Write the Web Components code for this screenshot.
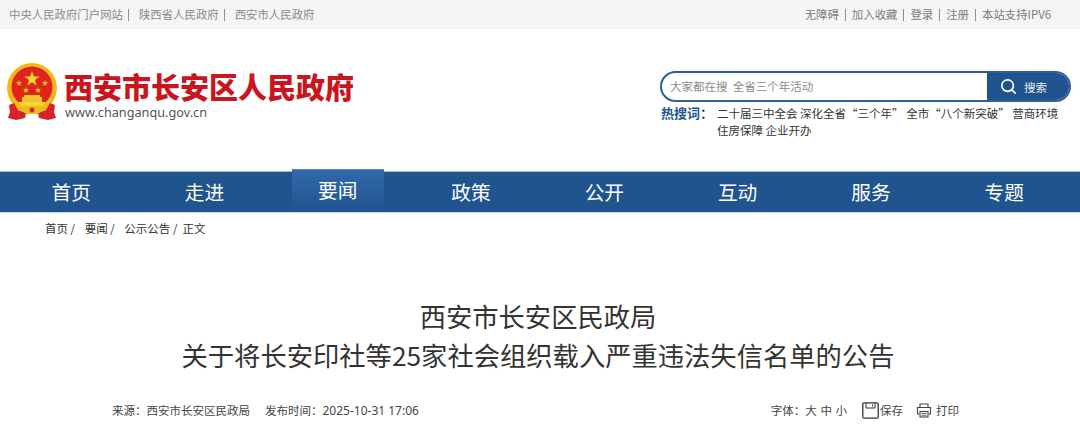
<!DOCTYPE html>
<html lang="zh">
<head>
<meta charset="utf-8">
<title>西安市长安区人民政府</title>
<style>
  html,body{margin:0;padding:0;background:#fff;}
  body{width:1080px;height:425px;overflow:hidden;font-family:"Noto Sans CJK SC","Noto Sans",sans-serif;}
</style>
</head>
<body>
<top-bar></top-bar>
<site-header></site-header>
<main-nav></main-nav>
<bread-crumb></bread-crumb>
<article-head></article-head>

<script>
// top grey strip
class TopBar extends HTMLElement{
    constructor(){
        super()
        const shadow = this.attachShadow({mode:"open"})
        shadow.innerHTML = `
        <style>
            :host{display:flex;justify-content:space-between;align-items:center;height:29px;padding:0 29px 0 9px;background:#f5f5f5;color:#8a8a8a;font-size:11.4px;line-height:29px;}
            .l,.r{display:flex;align-items:center;}
            .r{color:#7b7b7b;}
            i{display:block;width:1px;height:12px;background:#8f8f8f;}
            .l i{margin:0 10px 0 5px;}
            .r i{margin:0 6px;}
        </style>
        <div class="l"><span>中央人民政府门户网站</span><i></i><span>陕西省人民政府</span><i></i><span>西安市人民政府</span></div>
        <div class="r"><span>无障碍</span><i></i><span>加入收藏</span><i></i><span>登录</span><i></i><span>注册</span><i></i><span>本站支持IPV6</span></div>
        `
    }
}

class SearchBox extends HTMLElement{
    constructor(){
        super()
        const shadow = this.attachShadow({mode:"open"})
        shadow.innerHTML = `
        <style>
            :host{display:flex;width:411px;height:31px;box-sizing:border-box;border:2px solid #2f5f98;border-radius:16px;overflow:hidden;background:#fff;}
            .txt{flex:1;padding-left:8px;font-size:11.5px;line-height:27px;color:#8c8c8c;white-space:pre;}
            .btn{width:84px;margin:-2px -2px -2px 0;background:#20548f;color:#e4ebf3;display:flex;align-items:center;font-size:11.5px;padding-left:13px;gap:7px;box-sizing:border-box;flex:none;}
            svg{display:block;}
        </style>
        <div class="txt">大家都在搜  全省三个年活动</div>
        <div class="btn">
            <svg width="17" height="17" viewBox="0 0 17 17" fill="none" stroke="#fff" stroke-width="1.7"><circle cx="7.6" cy="7.6" r="5.8"/><path d="M11.8 11.8l3.4 3.4" stroke-linecap="round"/></svg>
            <span>搜索</span>
        </div>
        `
    }
}

class HotWords extends HTMLElement{
    constructor(){
        super()
        const shadow = this.attachShadow({mode:"open"})
        shadow.innerHTML = `
        <style>
            :host{display:flex;font-size:11.5px;line-height:17px;color:#333;}
            b{flex:none;width:56px;margin-left:1px;color:#20548f;font-size:13px;font-weight:700;line-height:16px;white-space:pre;}
            .w{width:350px;white-space:pre-wrap;}
        </style>
        <b>热搜词：</b>
        <div class="w">二十届三中全会 深化全省“三个年” 全市“八个新突破” 营商环境 住房保障 企业开办</div>
        `
    }
}

// emblem + site name, right side search
class SiteHeader extends HTMLElement{
    constructor(){
        super()
        const shadow = this.attachShadow({mode:"open"})
        shadow.innerHTML = `
        <style>
            :host{display:flex;justify-content:space-between;height:143px;box-sizing:border-box;padding:34px 9px 0 6px;}
            .logo{display:flex;gap:6px;height:60px;}
            svg{display:block;flex:none;}
            .name{padding-top:6px;}
            h1{margin:0;font-size:29px;line-height:34px;font-weight:900;color:#c8161e;white-space:nowrap;}
            .url{font-family:"Noto Sans",sans-serif;font-size:12.7px;line-height:16px;color:#555;margin:1px 0 0 1px;}
            .right{padding-top:8px;display:flex;flex-direction:column;gap:3px;}
        </style>
        <div class="logo">
            <svg width="52" height="57" viewBox="0 0 52 57">
                <circle cx="26" cy="25" r="25" fill="#eeb91c"/>
                <circle cx="26" cy="24" r="20.5" fill="#e2231a"/>
                <path d="M5 33l5 13 8 3h16l8-3 5-13-8 7H13z" fill="#eeb91c"/>
                <path d="M3 42l5-2 4 7 8 3-1 5-9 2-8-2 2-6z" fill="#d8222a"/>
                <path d="M49 42l-5-2-4 7-8 3 1 5 9 2 8-2-2-6z" fill="#d8222a"/>
                <path d="M26 8l1.9 5.6h5.9l-4.8 3.5 1.8 5.6-4.8-3.5-4.8 3.5 1.8-5.6-4.8-3.5h5.9z" fill="#f6d531"/>
                <path d="M13 17l.8 2.3h2.4l-2 1.4.8 2.3-2-1.4-2 1.4.8-2.3-2-1.4h2.4zM39 17l.8 2.3h2.4l-2 1.4.8 2.3-2-1.4-2 1.4.8-2.3-2-1.4h2.4zM20 24l.8 2.3h2.4l-2 1.4.8 2.3-2-1.4-2 1.4.8-2.3-2-1.4h2.4zM32 24l.8 2.3h2.4l-2 1.4.8 2.3-2-1.4-2 1.4.8-2.3-2-1.4h2.4z" fill="#f6d531"/>
                <path d="M18 32h16v2h2v5H16v-5h2z" fill="#f0c22c"/>
                <path d="M12 39h28l-3 4H15z" fill="#f6d531"/>
                <path d="M17 45c3-3 6-1 9 1 3-2 6-4 9-1l-3 6H20z" fill="#eeb91c"/>
                <circle cx="26" cy="47" r="2.4" fill="#e2231a"/>
            </svg>
            <div class="name">
                <h1>西安市长安区人民政府</h1>
                <div class="url">www.changanqu.gov.cn</div>
            </div>
        </div>
        <div class="right">
            <search-box></search-box>
            <hot-words></hot-words>
        </div>
        `
    }
}

class MainNav extends HTMLElement{
    constructor(){
        super()
        const shadow = this.attachShadow({mode:"open"})
        const items = ["首页","走进","要闻","政策","公开","互动","服务","专题"]
        shadow.innerHTML = `
        <style>
            :host{display:grid;grid-template-columns:repeat(8,133.3px);padding-left:4.5px;height:40px;background:#20548f;color:#fff;font-size:19.7px;line-height:40px;text-align:center;box-shadow:0 -1px 0 #a9bdd4,0 1px 0 #c3d1e0;}
            div{height:40px;}
            .on{justify-self:center;width:92px;height:43px;margin-top:-3px;line-height:40px;background:linear-gradient(#3269ab,#20548f);border-top:1px solid #5d86b8;box-sizing:border-box;}
        </style>
        ${items.map((t,i)=>`<div class="${i==2?"on":""}">${t}</div>`).join("")}
        `
    }
}

class BreadCrumb extends HTMLElement{
    constructor(){
        super()
        const shadow = this.attachShadow({mode:"open"})
        shadow.innerHTML = `
        <style>
            :host{display:flex;gap:7px;height:33px;padding-left:45px;font-size:11.5px;line-height:33px;color:#333;white-space:pre;}
            .last{margin-left:-2px;}
        </style>
        <span>首页 / </span><span>要闻 / </span><span>公示公告 /</span><span class="last">正文</span>
        `
    }
}

class ArticleHead extends HTMLElement{
    constructor(){
        super()
        const shadow = this.attachShadow({mode:"open"})
        shadow.innerHTML = `
        <style>
            :host{display:block;color:#333;}
            h2{margin:0;padding:51px 4px 0 0;font-weight:400;font-size:26.3px;line-height:39px;text-align:center;color:#333;}
            .meta{display:flex;justify-content:space-between;align-items:center;margin-top:26px;height:20px;padding:0 121px 0 112px;font-size:11.5px;color:#444;}
            .src{display:flex;gap:15px;}
            .num{font-family:"Noto Sans","Noto Sans CJK SC",sans-serif;font-size:12px;}
            .tools{display:flex;align-items:center;}
            .size{word-spacing:1px;margin-right:15px;}
            .tool{display:flex;align-items:center;gap:1px;}
            .print{margin-left:13px;gap:4px;}
            svg{display:block;}
        </style>
        <h2>西安市长安区民政局<br>关于将长安印社等25家社会组织载入严重违法失信名单的公告</h2>
        <div class="meta">
            <div class="src"><span>来源：西安市长安区民政局</span><span>发布时间：<span class="num">2025-10-31 17:06</span></span></div>
            <div class="tools">
                <span class="size">字体：大 中 小</span>
                <div class="tool">
                    <svg width="17" height="17" viewBox="0 0 17 17" fill="none" stroke="#333"><rect x=".8" y=".8" width="15.4" height="15.4" rx="1.5" stroke-width="1.3"/><path d="M4 1v5h9V1M10.5 2.5v2" stroke-width="1"/></svg>
                    <span>保存</span>
                </div>
                <div class="tool print">
                    <svg width="16" height="15" viewBox="0 0 16 15" fill="none" stroke="#444" stroke-width="1.1"><path d="M4 4V1h8v3M3.5 11H1.5V4.5h13V11h-2"/><rect x="4" y="8.5" width="8" height="5.5"/><path d="M5.5 10.5h5M5.5 12.3h5" stroke-width=".8"/></svg>
                    <span>打印</span>
                </div>
            </div>
        </div>
        `
    }
}

customElements.define("top-bar",TopBar)
customElements.define("search-box",SearchBox)
customElements.define("hot-words",HotWords)
customElements.define("site-header",SiteHeader)
customElements.define("main-nav",MainNav)
customElements.define("bread-crumb",BreadCrumb)
customElements.define("article-head",ArticleHead)
</script>
</body>
</html>
